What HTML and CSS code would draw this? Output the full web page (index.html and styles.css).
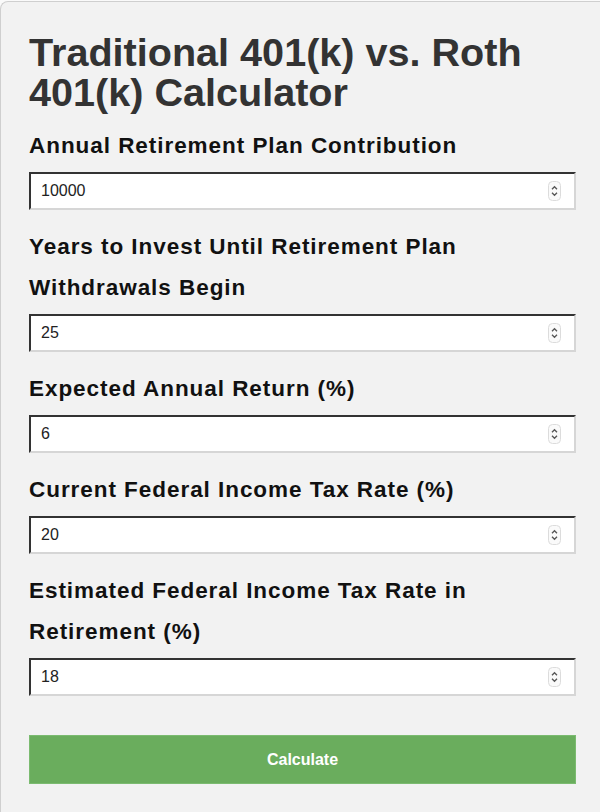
FILE: index.html
```html
<!DOCTYPE html>
<html lang="en">
<head>
  <meta charset="UTF-8" />
  <title>Traditional 401(k) vs. Roth 401(k) Calculator</title>
  <link rel="stylesheet" href="styles.css">
</head>
<body>

<div class="calculator">
  <h1>Traditional 401(k) vs. Roth 401(k) Calculator</h1>

  <label for="contribution">Annual Retirement Plan Contribution</label>
  <div class="num-input">
    <input type="text" id="contribution" value="10000">
    <span class="spinner">
      <svg width="13" height="20" viewBox="0 0 13 20"><rect x="0.5" y="0.5" width="12" height="19" rx="4" fill="#fafafa" stroke="#dcdcdc"/><path d="M4 8.2 L6.5 5.7 L9 8.2 M4 11.8 L6.5 14.3 L9 11.8" fill="none" stroke="#555" stroke-width="1.3"/></svg>
    </span>
  </div>

  <label for="years">Years to Invest Until Retirement Plan Withdrawals Begin</label>
  <div class="num-input">
    <input type="text" id="years" value="25">
    <span class="spinner">
      <svg width="13" height="20" viewBox="0 0 13 20"><rect x="0.5" y="0.5" width="12" height="19" rx="4" fill="#fafafa" stroke="#dcdcdc"/><path d="M4 8.2 L6.5 5.7 L9 8.2 M4 11.8 L6.5 14.3 L9 11.8" fill="none" stroke="#555" stroke-width="1.3"/></svg>
    </span>
  </div>

  <label for="return">Expected Annual Return (%)</label>
  <div class="num-input">
    <input type="text" id="return" value="6">
    <span class="spinner">
      <svg width="13" height="20" viewBox="0 0 13 20"><rect x="0.5" y="0.5" width="12" height="19" rx="4" fill="#fafafa" stroke="#dcdcdc"/><path d="M4 8.2 L6.5 5.7 L9 8.2 M4 11.8 L6.5 14.3 L9 11.8" fill="none" stroke="#555" stroke-width="1.3"/></svg>
    </span>
  </div>

  <label for="currentTax">Current Federal Income Tax Rate (%)</label>
  <div class="num-input">
    <input type="text" id="currentTax" value="20">
    <span class="spinner">
      <svg width="13" height="20" viewBox="0 0 13 20"><rect x="0.5" y="0.5" width="12" height="19" rx="4" fill="#fafafa" stroke="#dcdcdc"/><path d="M4 8.2 L6.5 5.7 L9 8.2 M4 11.8 L6.5 14.3 L9 11.8" fill="none" stroke="#555" stroke-width="1.3"/></svg>
    </span>
  </div>

  <label for="futureTax">Estimated Federal Income Tax Rate in Retirement (%)</label>
  <div class="num-input">
    <input type="text" id="futureTax" value="18">
    <span class="spinner">
      <svg width="13" height="20" viewBox="0 0 13 20"><rect x="0.5" y="0.5" width="12" height="19" rx="4" fill="#fafafa" stroke="#dcdcdc"/><path d="M4 8.2 L6.5 5.7 L9 8.2 M4 11.8 L6.5 14.3 L9 11.8" fill="none" stroke="#555" stroke-width="1.3"/></svg>
    </span>
  </div>

  <button class="calc-button">Calculate</button>
</div>

</body>
</html>
```

FILE: styles.css
```css
body {
  font-family: "Liberation Sans", Arial, sans-serif;
  background: #fafafa;
  margin: 0;
  padding: 0;
  overflow: hidden;
}

.calculator {
  box-sizing: border-box;
  margin-top: 1px;
  background: #f2f2f2;
  border: 1px solid #cfcfcf;
  border-right: none;
  border-bottom: none;
  border-top-left-radius: 8px;
  padding: 30px 24px 20px 28px;
  min-height: 811px;
}

h1 {
  margin: 0 0 13px;
  font-size: 39.6px;
  line-height: 40px;
  color: #333;
  font-weight: bold;
}

label {
  display: block;
  font-size: 22.5px;
  letter-spacing: 0.95px;
  line-height: 41px;
  font-weight: bold;
  color: #111;
  margin-bottom: 6px;
}

/* number field with its spin arrows */
.num-input {
  display: flex;
  align-items: center;
  height: 38px;
  box-sizing: border-box;
  background: #fff;
  border: 2px solid #d6d6d6;
  border-top-color: #333;
  border-left-color: #333;
  margin-bottom: 16px;
}

.num-input input {
  flex: 1;
  min-width: 0;
  border: none;
  outline: none;
  background: transparent;
  padding: 0 0 0 10px;
  font-family: "Liberation Sans", Arial, sans-serif;
  font-size: 16px;
  color: #222;
}

.spinner {
  display: flex;
  margin-right: 13px;
}

/* margin collapses with the field above, so this is the whole gap */
.calc-button {
  display: block;
  width: 100%;
  height: 49px;
  margin-top: 39px;
  background: #6aad5d;
  border: 1px solid #7bbb70;
  color: #fff;
  font-family: "Liberation Sans", Arial, sans-serif;
  font-size: 16px;
  font-weight: bold;
  cursor: pointer;
}
```
